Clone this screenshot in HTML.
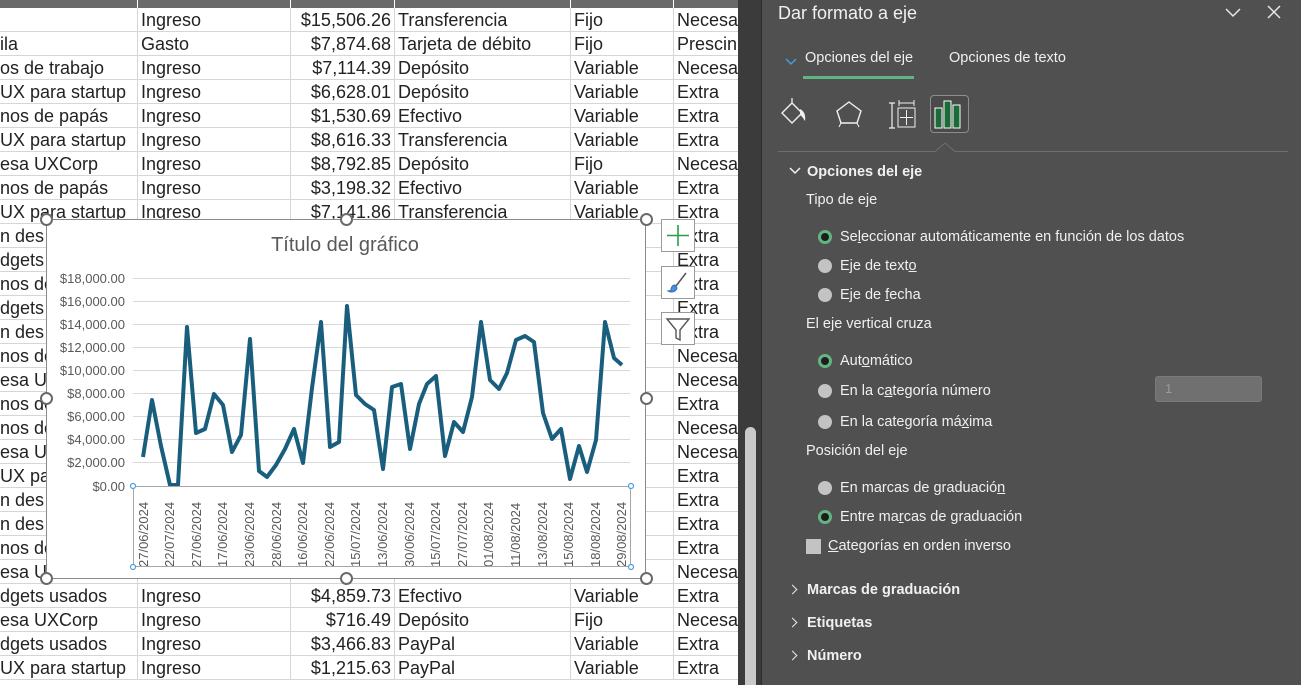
<!DOCTYPE html>
<html><head><meta charset="utf-8"><style>
*{margin:0;padding:0;box-sizing:border-box}
html,body{width:1301px;height:685px;overflow:hidden}
body{position:relative;background:#fff;font-family:"Liberation Sans",sans-serif}
#sheet{position:absolute;left:0;top:0;width:738px;height:685px;background:#fff;overflow:hidden}
.hdr{position:absolute;top:0;height:8px;background:#6a6a6a;border-right:1px solid #fff}
.row{position:absolute;left:0;width:738px;height:24px;border-bottom:1px solid #d6d6d6;font-size:18px;color:#222;line-height:24px}
.c{position:absolute;top:0;height:24px;border-right:1px solid #d6d6d6;white-space:nowrap;overflow:hidden;padding-left:3px}
.a{left:0;width:138px;padding-left:0}
.b{left:138px;width:153px}
.d{left:291px;width:104px;text-align:right;padding-right:3px}
.e{left:395px;width:176px}
.f{left:571px;width:103px}
.g{left:674px;width:70px}
#strip{position:absolute;left:738px;top:0;width:24px;height:685px;background:#3b3b3b;border-right:1px solid #2e2e2e}
#thumb{position:absolute;left:745px;top:427px;width:11px;height:258px;background:#c9c9c9;border-radius:6px 6px 0 0}
#panel{position:absolute;left:762px;top:0;width:539px;height:685px;background:#505050;color:#f0f0f0;font-size:14.5px;overflow:hidden}
#pi{position:absolute;left:0;top:2px;width:539px;height:685px}
.t{position:absolute;white-space:nowrap}
.rad{position:absolute;width:14px;height:14px;border-radius:50%;background:#c3c3c3}
.rad.on{background:#1e1e1e;border:3px solid #62b583}
.bold{font-weight:bold}
.chev{position:absolute;width:7px;height:7px;border-right:1.6px solid #e8e8e8;border-bottom:1.6px solid #e8e8e8}
u{text-decoration:underline}
#chart{position:absolute;left:46px;top:219px;width:600px;height:360px;background:#fff;border:1px solid #8a8a8a}
.h{position:absolute;width:13px;height:13px;border-radius:50%;background:#fff;border:2px solid #6a6a6a}
.sb{position:absolute;left:661px;width:34px;height:33px;background:#fff;border:1px solid #9a9a9a}
</style></head><body>
<div id="sheet">
<div class="hdr" style="left:0;width:138px"></div><div class="hdr" style="left:138px;width:153px"></div><div class="hdr" style="left:291px;width:104px"></div><div class="hdr" style="left:395px;width:176px"></div><div class="hdr" style="left:571px;width:103px"></div><div class="hdr" style="left:674px;width:70px"></div>
<div class="row" style="top:8px"><div class="c a"></div><div class="c b">Ingreso</div><div class="c d">$15,506.26</div><div class="c e">Transferencia</div><div class="c f">Fijo</div><div class="c g">Necesa</div></div>
<div class="row" style="top:32px"><div class="c a">ila</div><div class="c b">Gasto</div><div class="c d">$7,874.68</div><div class="c e">Tarjeta de débito</div><div class="c f">Fijo</div><div class="c g">Prescin</div></div>
<div class="row" style="top:56px"><div class="c a">os de trabajo</div><div class="c b">Ingreso</div><div class="c d">$7,114.39</div><div class="c e">Depósito</div><div class="c f">Variable</div><div class="c g">Necesa</div></div>
<div class="row" style="top:80px"><div class="c a">UX para startup</div><div class="c b">Ingreso</div><div class="c d">$6,628.01</div><div class="c e">Depósito</div><div class="c f">Variable</div><div class="c g">Extra</div></div>
<div class="row" style="top:104px"><div class="c a">nos de papás</div><div class="c b">Ingreso</div><div class="c d">$1,530.69</div><div class="c e">Efectivo</div><div class="c f">Variable</div><div class="c g">Extra</div></div>
<div class="row" style="top:128px"><div class="c a">UX para startup</div><div class="c b">Ingreso</div><div class="c d">$8,616.33</div><div class="c e">Transferencia</div><div class="c f">Variable</div><div class="c g">Extra</div></div>
<div class="row" style="top:152px"><div class="c a">esa UXCorp</div><div class="c b">Ingreso</div><div class="c d">$8,792.85</div><div class="c e">Depósito</div><div class="c f">Fijo</div><div class="c g">Necesa</div></div>
<div class="row" style="top:176px"><div class="c a">nos de papás</div><div class="c b">Ingreso</div><div class="c d">$3,198.32</div><div class="c e">Efectivo</div><div class="c f">Variable</div><div class="c g">Extra</div></div>
<div class="row" style="top:200px"><div class="c a">UX para startup</div><div class="c b">Ingreso</div><div class="c d">$7,141.86</div><div class="c e">Transferencia</div><div class="c f">Variable</div><div class="c g">Extra</div></div>
<div class="row" style="top:224px"><div class="c a">n des</div><div class="c b"></div><div class="c d"></div><div class="c e"></div><div class="c f"></div><div class="c g">Extra</div></div>
<div class="row" style="top:248px"><div class="c a">dgets</div><div class="c b"></div><div class="c d"></div><div class="c e"></div><div class="c f"></div><div class="c g">Extra</div></div>
<div class="row" style="top:272px"><div class="c a">nos de</div><div class="c b"></div><div class="c d"></div><div class="c e"></div><div class="c f"></div><div class="c g">Extra</div></div>
<div class="row" style="top:296px"><div class="c a">dgets</div><div class="c b"></div><div class="c d"></div><div class="c e"></div><div class="c f"></div><div class="c g">Extra</div></div>
<div class="row" style="top:320px"><div class="c a">n des</div><div class="c b"></div><div class="c d"></div><div class="c e"></div><div class="c f"></div><div class="c g">Extra</div></div>
<div class="row" style="top:344px"><div class="c a">nos de</div><div class="c b"></div><div class="c d"></div><div class="c e"></div><div class="c f"></div><div class="c g">Necesa</div></div>
<div class="row" style="top:368px"><div class="c a">esa UX</div><div class="c b"></div><div class="c d"></div><div class="c e"></div><div class="c f"></div><div class="c g">Necesa</div></div>
<div class="row" style="top:392px"><div class="c a">nos de</div><div class="c b"></div><div class="c d"></div><div class="c e"></div><div class="c f"></div><div class="c g">Extra</div></div>
<div class="row" style="top:416px"><div class="c a">nos de</div><div class="c b"></div><div class="c d"></div><div class="c e"></div><div class="c f"></div><div class="c g">Necesa</div></div>
<div class="row" style="top:440px"><div class="c a">esa UX</div><div class="c b"></div><div class="c d"></div><div class="c e"></div><div class="c f"></div><div class="c g">Necesa</div></div>
<div class="row" style="top:464px"><div class="c a">UX pa</div><div class="c b"></div><div class="c d"></div><div class="c e"></div><div class="c f"></div><div class="c g">Extra</div></div>
<div class="row" style="top:488px"><div class="c a">n des</div><div class="c b"></div><div class="c d"></div><div class="c e"></div><div class="c f"></div><div class="c g">Extra</div></div>
<div class="row" style="top:512px"><div class="c a">n des</div><div class="c b"></div><div class="c d"></div><div class="c e"></div><div class="c f"></div><div class="c g">Extra</div></div>
<div class="row" style="top:536px"><div class="c a">nos de</div><div class="c b"></div><div class="c d"></div><div class="c e"></div><div class="c f"></div><div class="c g">Extra</div></div>
<div class="row" style="top:560px"><div class="c a">esa UX</div><div class="c b"></div><div class="c d"></div><div class="c e"></div><div class="c f"></div><div class="c g">Necesa</div></div>
<div class="row" style="top:584px"><div class="c a">dgets usados</div><div class="c b">Ingreso</div><div class="c d">$4,859.73</div><div class="c e">Efectivo</div><div class="c f">Variable</div><div class="c g">Extra</div></div>
<div class="row" style="top:608px"><div class="c a">esa UXCorp</div><div class="c b">Ingreso</div><div class="c d">$716.49</div><div class="c e">Depósito</div><div class="c f">Fijo</div><div class="c g">Necesa</div></div>
<div class="row" style="top:632px"><div class="c a">dgets usados</div><div class="c b">Ingreso</div><div class="c d">$3,466.83</div><div class="c e">PayPal</div><div class="c f">Variable</div><div class="c g">Extra</div></div>
<div class="row" style="top:656px"><div class="c a">UX para startup</div><div class="c b">Ingreso</div><div class="c d">$1,215.63</div><div class="c e">PayPal</div><div class="c f">Variable</div><div class="c g">Extra</div></div>
</div>

<div id="chart"></div>
<svg style="position:absolute;left:0;top:0" width="738" height="685">
<text x="345" y="251" text-anchor="middle" font-family="Liberation Sans" font-size="20" fill="#595959">Título del gráfico</text>
<g stroke="#d9d9d9" stroke-width="1">
<line x1="133" x2="630" y1="278.5" y2="278.5"/><line x1="133" x2="630" y1="301.5" y2="301.5"/><line x1="133" x2="630" y1="324.5" y2="324.5"/><line x1="133" x2="630" y1="347.5" y2="347.5"/><line x1="133" x2="630" y1="370.5" y2="370.5"/><line x1="133" x2="630" y1="393.5" y2="393.5"/><line x1="133" x2="630" y1="416.5" y2="416.5"/><line x1="133" x2="630" y1="439.5" y2="439.5"/><line x1="133" x2="630" y1="462.5" y2="462.5"/>
</g>
<line x1="133" x2="630" y1="486.5" y2="486.5" stroke="#bfbfbf"/>
<g font-family="Liberation Sans" font-size="13" fill="#595959" text-anchor="end">
<text x="125" y="283">$18,000.00</text><text x="125" y="306">$16,000.00</text><text x="125" y="329">$14,000.00</text><text x="125" y="352">$12,000.00</text><text x="125" y="375">$10,000.00</text><text x="125" y="398">$8,000.00</text><text x="125" y="421">$6,000.00</text><text x="125" y="444">$4,000.00</text><text x="125" y="467">$2,000.00</text><text x="125" y="491">$0.00</text>
</g>
<polyline fill="none" stroke="#1a5e7e" stroke-width="4" stroke-linejoin="round" points="143,457 152,400 161,446 170,485 178,485 187,327 196,433 205,429 214,394 223,405 232,452 241,435 250,339 259,471 267,477 276,465 285,449 294,429 303,463 312,388 321,322 330,447 339,442 347,306 356,395 365,404 374,410 383,469 392,387 401,384 410,449 419,404 427,384 436,376 445,456 454,422 463,432 472,397 481,322 490,380 499,389 507,373 516,340 525,336 534,342 543,413 552,439 561,429 570,479 579,446 587,472 596,440 605,322 614,358 622,365"/>
<g font-family="Liberation Sans" font-size="13" fill="#595959">
<text transform="translate(148,567) rotate(-90)">27/06/2024</text>
<text transform="translate(174,567) rotate(-90)">22/07/2024</text>
<text transform="translate(201,567) rotate(-90)">27/06/2024</text>
<text transform="translate(227,567) rotate(-90)">17/06/2024</text>
<text transform="translate(254,567) rotate(-90)">23/06/2024</text>
<text transform="translate(281,567) rotate(-90)">28/06/2024</text>
<text transform="translate(307,567) rotate(-90)">16/06/2024</text>
<text transform="translate(334,567) rotate(-90)">22/06/2024</text>
<text transform="translate(360,567) rotate(-90)">15/07/2024</text>
<text transform="translate(387,567) rotate(-90)">13/06/2024</text>
<text transform="translate(414,567) rotate(-90)">30/06/2024</text>
<text transform="translate(440,567) rotate(-90)">15/07/2024</text>
<text transform="translate(467,567) rotate(-90)">27/07/2024</text>
<text transform="translate(493,567) rotate(-90)">01/08/2024</text>
<text transform="translate(520,567) rotate(-90)">11/08/2024</text>
<text transform="translate(547,567) rotate(-90)">13/08/2024</text>
<text transform="translate(573,567) rotate(-90)">15/08/2024</text>
<text transform="translate(600,567) rotate(-90)">18/08/2024</text>
<text transform="translate(626,567) rotate(-90)">29/08/2024</text>
</g>
<rect x="133.5" y="486.5" width="497" height="80" fill="none" stroke="#a6a6a6"/>
<g fill="#fff" stroke="#4a9fe0" stroke-width="1.2"><circle cx="133" cy="486" r="2.5"/><circle cx="631" cy="486" r="2.5"/><circle cx="133" cy="567" r="2.5"/><circle cx="631" cy="567" r="2.5"/></g>
</svg>
<div class="h" style="left:40px;top:213px"></div><div class="h" style="left:340px;top:213px"></div><div class="h" style="left:640px;top:213px"></div>
<div class="h" style="left:40px;top:392px"></div><div class="h" style="left:640px;top:392px"></div>
<div class="h" style="left:40px;top:572px"></div><div class="h" style="left:340px;top:572px"></div><div class="h" style="left:640px;top:572px"></div>
<div class="sb" style="top:219px"><svg width="32" height="31"><path d="M16 5V26M5 15.5H27" stroke="#2e9a4e" stroke-width="1.6"/></svg></div>
<div class="sb" style="top:266px"><svg width="32" height="31"><path d="M24 6L14 19" stroke="#555" stroke-width="1.5"/><path d="M13 18c-3 0-4 3-4 5-1 1-2 1-3 1 3 2 8 1 9-3z" fill="#4a8fd8" stroke="#2d6db5"/></svg></div>
<div class="sb" style="top:312px"><svg width="32" height="31"><path d="M5 6H27L18 17V27L14 25V17Z" fill="none" stroke="#555" stroke-width="1.4"/></svg></div>

<div id="strip"></div><div id="thumb"></div>
<div id="panel"><div id="pi">
<div class="t" style="left:16px;top:1px;font-size:18px">Dar formato a eje</div>
<svg style="position:absolute;left:462px;top:3px" width="60" height="16"><path d="M2 4L9 11L16 4" fill="none" stroke="#e8e8e8" stroke-width="1.5"/><path d="M44 1L56 13M56 1L44 13" stroke="#e8e8e8" stroke-width="1.5"/></svg>
<svg style="position:absolute;left:23px;top:56px" width="12" height="8"><path d="M1 1L6 6L11 1" fill="none" stroke="#4a9fe0" stroke-width="1.4"/></svg>
<div class="t" style="left:43px;top:48px">Opciones del eje</div>
<div style="position:absolute;left:41px;top:74px;width:111px;height:3px;background:#62b583"></div>
<div class="t" style="left:187px;top:48px">Opciones de texto</div>
<svg style="position:absolute;left:18px;top:93px" width="200" height="40">
<path d="M12 8L22 18L12 28L2 18Z" fill="none" stroke="#f0f0f0" stroke-width="1.4"/><path d="M12 8V3" stroke="#f0f0f0" stroke-width="1.3"/><path d="M20 14c4 2 6 6 5 12-2-3-3-5-5-6z" fill="#f0f0f0"/>
<path d="M69 7L81 16L77 28H61L57 16Z" fill="none" stroke="#f0f0f0" stroke-width="1.4"/><path d="M61 28L59 32M77 28L79 32" stroke="#f0f0f0"/>
<path d="M112 8V33M109 8H115M109 33H115" stroke="#f0f0f0" stroke-width="1.2"/><path d="M119 8H134M119 5V11M134 5V11" stroke="#f0f0f0"/><rect x="118" y="13" width="17" height="19" fill="none" stroke="#f0f0f0"/><path d="M126.5 15V30M120 22.5H133" stroke="#f0f0f0"/>
</svg>
<div style="position:absolute;left:168px;top:93px;width:39px;height:38px;border:1px solid #8e8e8e;border-radius:4px;background:#4a4a4a"></div>
<svg style="position:absolute;left:171px;top:97px" width="34" height="32"><rect x="2" y="9" width="7" height="20" fill="#1b6b38" stroke="#fff"/><rect x="11" y="2" width="7" height="27" fill="#1b6b38" stroke="#fff"/><rect x="20" y="6" width="7" height="23" fill="#1b6b38" stroke="#fff"/></svg>
<svg style="position:absolute;left:16px;top:140px" width="510" height="12"><path d="M0 9.5H157L167 1L177 9.5H510" fill="none" stroke="#6e6e6e"/></svg>
<svg style="position:absolute;left:27px;top:165px" width="12" height="8"><path d="M1 1L6 6L11 1" fill="none" stroke="#f0f0f0" stroke-width="1.5"/></svg>
<div class="t bold" style="left:45px;top:162px">Opciones del eje</div>
<div class="t" style="left:44px;top:190px">Tipo de eje</div>
<div class="rad on" style="left:56px;top:228px"></div><div class="t" style="left:78px;top:227px">Se<u>l</u>eccionar automáticamente en función de los datos</div>
<div class="rad" style="left:56px;top:257px"></div><div class="t" style="left:78px;top:256px">Eje de text<u>o</u></div>
<div class="rad" style="left:56px;top:286px"></div><div class="t" style="left:78px;top:285px">Eje de <u>f</u>echa</div>
<div class="t" style="left:44px;top:314px">El eje vertical cruza</div>
<div class="rad on" style="left:56px;top:352px"></div><div class="t" style="left:78px;top:351px">Aut<u>o</u>mático</div>
<div class="rad" style="left:56px;top:382px"></div><div class="t" style="left:78px;top:381px">En la c<u>a</u>tegoría número</div>
<div style="position:absolute;left:393px;top:374px;width:107px;height:26px;background:#707070;border:1px solid #7a7a7a;border-radius:3px;color:#9a9a9a;font-size:13px;padding:4px 0 0 9px">1</div>
<div class="rad" style="left:56px;top:413px"></div><div class="t" style="left:78px;top:412px">En la categoría má<u>x</u>ima</div>
<div class="t" style="left:44px;top:441px">Posición del eje</div>
<div class="rad" style="left:56px;top:479px"></div><div class="t" style="left:78px;top:478px">En marcas de graduació<u>n</u></div>
<div class="rad on" style="left:56px;top:508px"></div><div class="t" style="left:78px;top:507px">Entre ma<u>r</u>cas de graduación</div>
<div style="position:absolute;left:44px;top:537px;width:15px;height:15px;background:#c3c3c3"></div><div class="t" style="left:66px;top:536px"><u>C</u>ategorías en orden inverso</div>
<div class="chev" style="left:27px;top:584px;transform:rotate(-45deg)"></div><div class="t bold" style="left:45px;top:580px">Marcas de graduación</div>
<div class="chev" style="left:27px;top:617px;transform:rotate(-45deg)"></div><div class="t bold" style="left:45px;top:613px">Etiquetas</div>
<div class="chev" style="left:27px;top:650px;transform:rotate(-45deg)"></div><div class="t bold" style="left:45px;top:646px">Número</div>
</div></div>
</body></html>
